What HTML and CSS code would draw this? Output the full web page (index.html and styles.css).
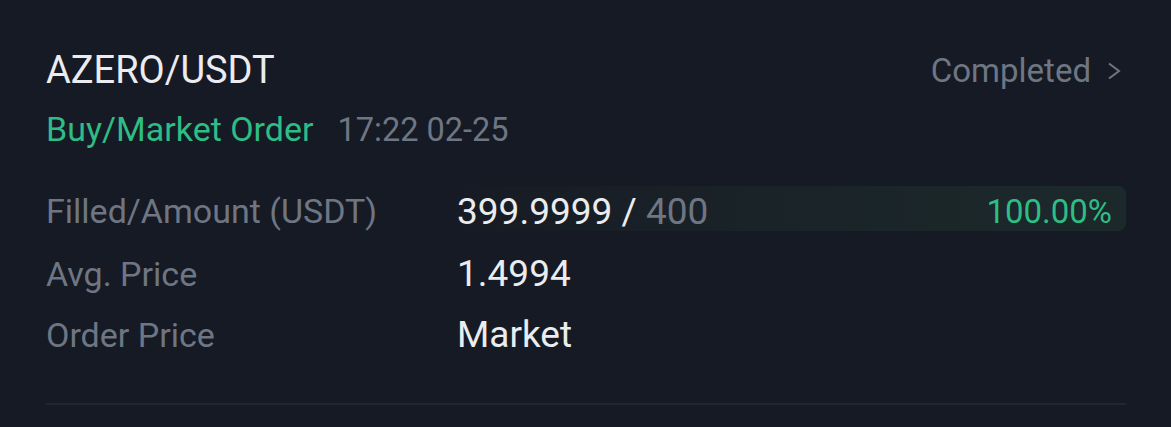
FILE: index.html
```html
<!DOCTYPE html>
<html lang="en">
<head>
  <meta charset="UTF-8" />
  <meta name="viewport" content="width=device-width, initial-scale=1.0"/>
  <title>Order History</title>
  <link rel="stylesheet" href="styles.css">
</head>
<body>

  <div class="order-card">
    <div class="order-head">
      <h2 class="pair">AZERO/USDT</h2>
      <a class="status" href="#">
        Completed
        <svg class="chevron" width="14" height="18" viewBox="0 0 14 18">
          <polyline points="2,1.5 12,9 2,16.5" fill="none" stroke="currentColor" stroke-width="2" />
        </svg>
      </a>
    </div>

    <div class="order-sub">
      <span class="side">Buy/Market Order</span>
      <span class="time">17:22 02-25</span>
    </div>

    <div class="details">
      <div class="row">
        <span class="label">Filled/Amount (USDT)</span>
        <div class="value progress">
          <span>399.9999 / <span class="muted">400</span></span>
          <span class="percent">100.00%</span>
        </div>
      </div>
      <div class="row">
        <span class="label">Avg. Price</span>
        <span class="value">1.4994</span>
      </div>
      <div class="row">
        <span class="label">Order Price</span>
        <span class="value">Market</span>
      </div>
    </div>

    <hr class="divider">
  </div>

</body>
</html>
```

FILE: styles.css
```css
body {
  margin: 0;
  padding: 0;
  background-color: #161a24;
  font-family: Roboto, "Liberation Sans", sans-serif;
  color: #eaecef;
}

.order-card {
  padding: 47px 45px 0 46px;
}

.order-head {
  display: flex;
  justify-content: space-between;
  align-items: center;
  height: 46px;
}

.pair {
  margin: 0;
  font-size: 38px;
  font-weight: 400;
  line-height: 46px;
}

/* status link on the right */
.status {
  display: flex;
  align-items: center;
  gap: 16px;
  color: #6f7683;
  text-decoration: none;
  font-size: 33px;
  line-height: 40px;
  padding-top: 2px;
}

.chevron {
  margin-right: 5px;
}

.order-sub {
  display: flex;
  align-items: baseline;
  gap: 24px;
  margin-top: 16px;
  line-height: 40px;
}

.side {
  color: #2ebd85;
  font-size: 34px;
}

.time {
  color: #6f7683;
  font-size: 32.5px;
}

.details {
  display: flex;
  flex-direction: column;
  gap: 16px;
  margin-top: 36px;
}

.row {
  display: grid;
  grid-template-columns: 400px 1fr;
  align-items: center;
  height: 45px;
  padding-top: 5px;
  box-sizing: border-box;
}

.label {
  color: #6f7683;
  font-size: 34px;
}

.value {
  font-size: 37px;
  padding-left: 11px;
}

.progress {
  display: flex;
  justify-content: space-between;
  align-items: center;
  height: 45px;
  margin-top: -5px;
  padding: 5px 14px 0 11px;
  box-sizing: border-box;
  border-radius: 8px;
  background: linear-gradient(90deg, rgba(28, 40, 42, 0) 0%, rgba(28, 40, 42, 0.7) 50%, #1c292b 100%);
}

.muted {
  color: #6f7683;
}

.percent {
  color: #2ebd85;
  font-size: 33px;
}

.divider {
  margin: 50px 0 0;
  border: none;
  height: 2px;
  background-color: #22262f;
}
```
